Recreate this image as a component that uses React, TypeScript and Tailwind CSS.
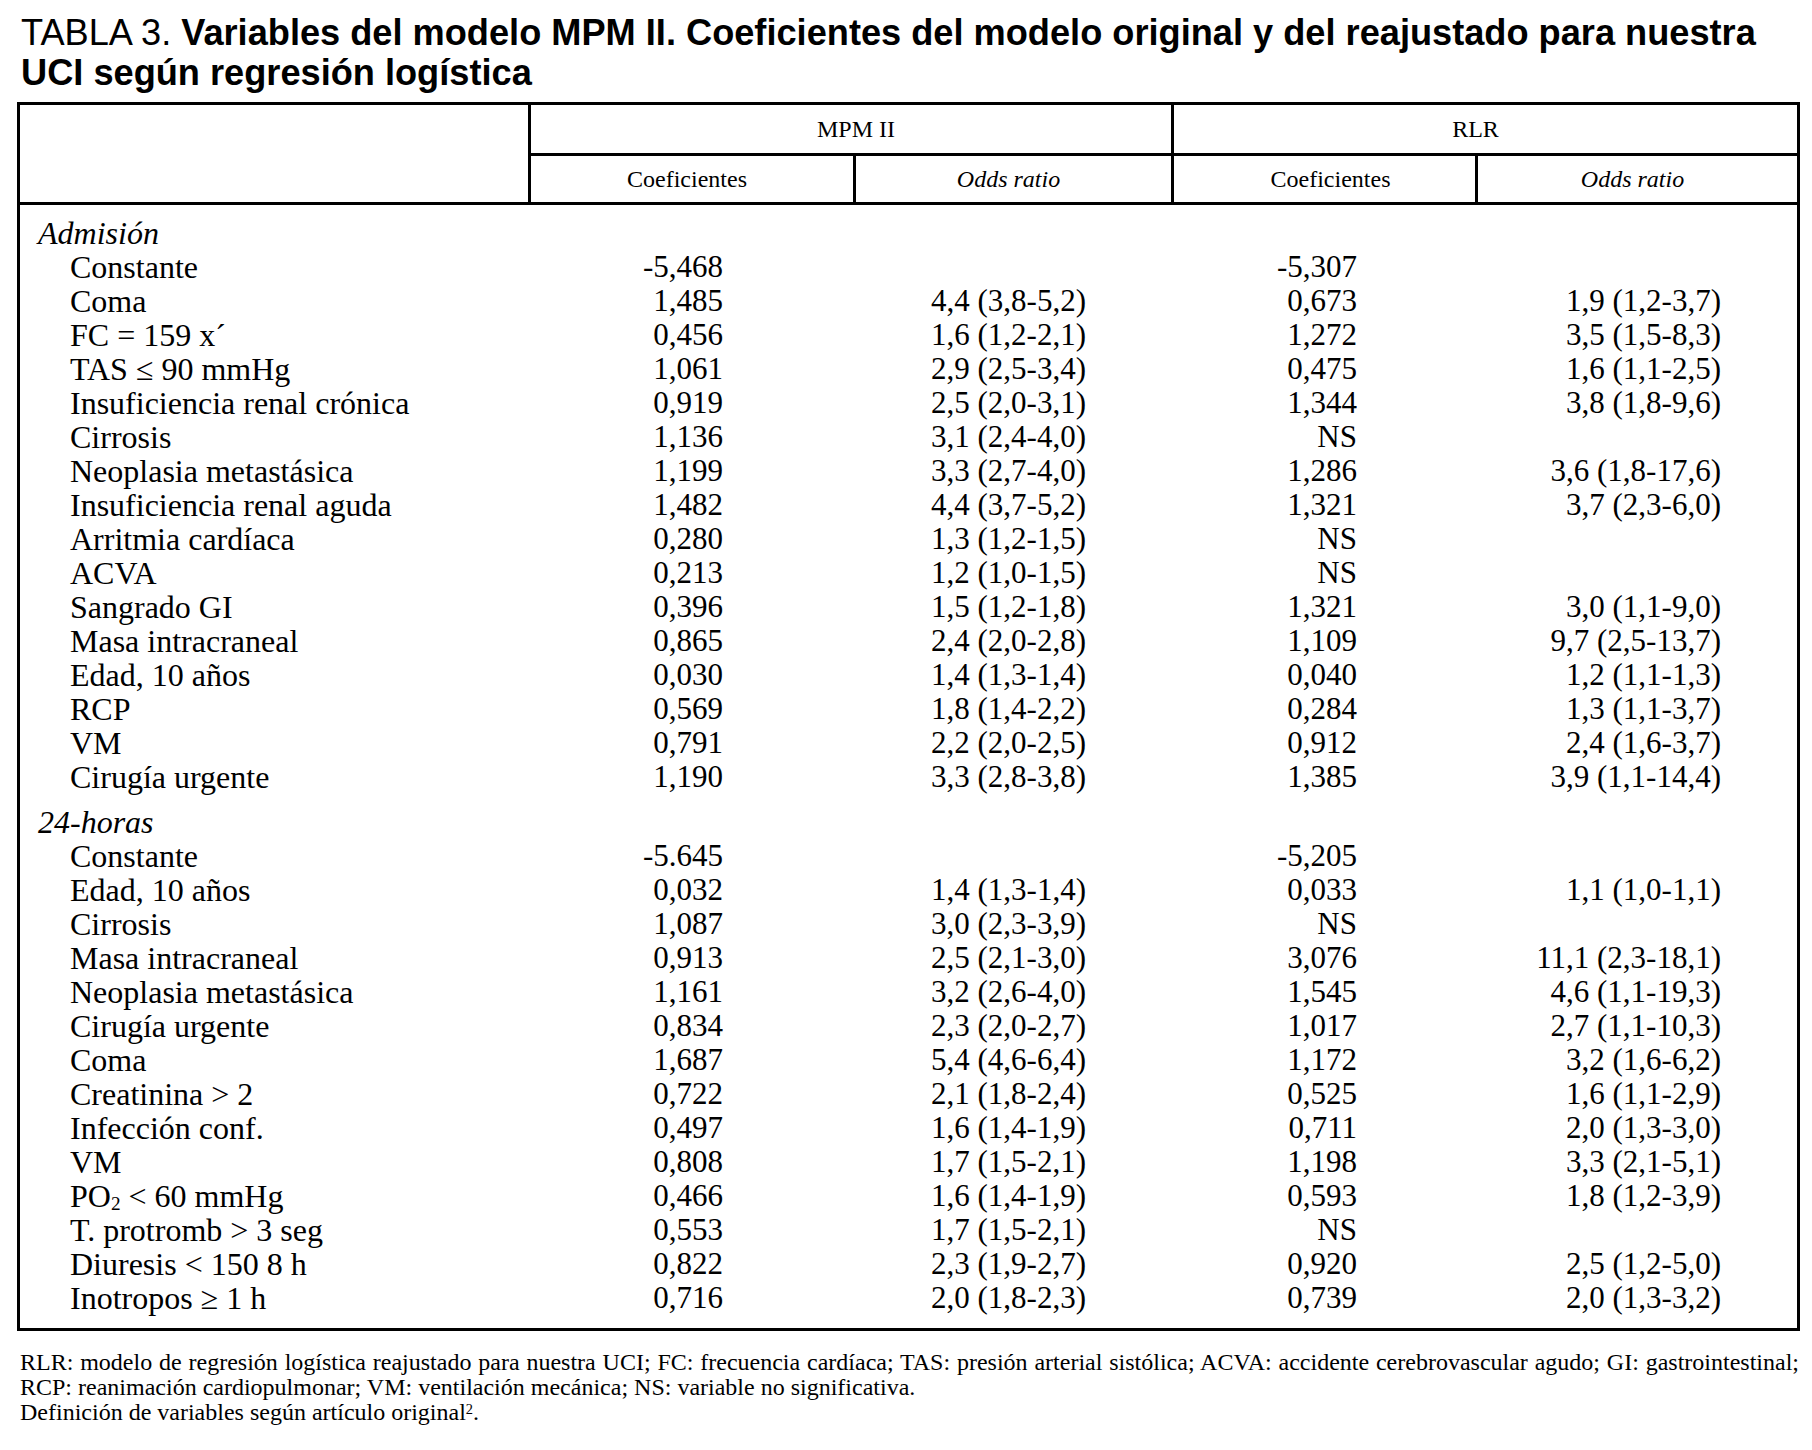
import React from "react";

type Row = { label: React.ReactNode; c1?: string; o1?: string; c2?: string; o2?: string };

const admision: Row[] = [
  { label: "Constante", c1: "-5,468", c2: "-5,307" },
  { label: "Coma", c1: "1,485", o1: "4,4 (3,8-5,2)", c2: "0,673", o2: "1,9 (1,2-3,7)" },
  { label: "FC = 159 x´", c1: "0,456", o1: "1,6 (1,2-2,1)", c2: "1,272", o2: "3,5 (1,5-8,3)" },
  { label: "TAS ≤ 90 mmHg", c1: "1,061", o1: "2,9 (2,5-3,4)", c2: "0,475", o2: "1,6 (1,1-2,5)" },
  { label: "Insuficiencia renal crónica", c1: "0,919", o1: "2,5 (2,0-3,1)", c2: "1,344", o2: "3,8 (1,8-9,6)" },
  { label: "Cirrosis", c1: "1,136", o1: "3,1 (2,4-4,0)", c2: "NS" },
  { label: "Neoplasia metastásica", c1: "1,199", o1: "3,3 (2,7-4,0)", c2: "1,286", o2: "3,6 (1,8-17,6)" },
  { label: "Insuficiencia renal aguda", c1: "1,482", o1: "4,4 (3,7-5,2)", c2: "1,321", o2: "3,7 (2,3-6,0)" },
  { label: "Arritmia cardíaca", c1: "0,280", o1: "1,3 (1,2-1,5)", c2: "NS" },
  { label: "ACVA", c1: "0,213", o1: "1,2 (1,0-1,5)", c2: "NS" },
  { label: "Sangrado GI", c1: "0,396", o1: "1,5 (1,2-1,8)", c2: "1,321", o2: "3,0 (1,1-9,0)" },
  { label: "Masa intracraneal", c1: "0,865", o1: "2,4 (2,0-2,8)", c2: "1,109", o2: "9,7 (2,5-13,7)" },
  { label: "Edad, 10 años", c1: "0,030", o1: "1,4 (1,3-1,4)", c2: "0,040", o2: "1,2 (1,1-1,3)" },
  { label: "RCP", c1: "0,569", o1: "1,8 (1,4-2,2)", c2: "0,284", o2: "1,3 (1,1-3,7)" },
  { label: "VM", c1: "0,791", o1: "2,2 (2,0-2,5)", c2: "0,912", o2: "2,4 (1,6-3,7)" },
  { label: "Cirugía urgente", c1: "1,190", o1: "3,3 (2,8-3,8)", c2: "1,385", o2: "3,9 (1,1-14,4)" },
];

const horas: Row[] = [
  { label: "Constante", c1: "-5.645", c2: "-5,205" },
  { label: "Edad, 10 años", c1: "0,032", o1: "1,4 (1,3-1,4)", c2: "0,033", o2: "1,1 (1,0-1,1)" },
  { label: "Cirrosis", c1: "1,087", o1: "3,0 (2,3-3,9)", c2: "NS" },
  { label: "Masa intracraneal", c1: "0,913", o1: "2,5 (2,1-3,0)", c2: "3,076", o2: "11,1 (2,3-18,1)" },
  { label: "Neoplasia metastásica", c1: "1,161", o1: "3,2 (2,6-4,0)", c2: "1,545", o2: "4,6 (1,1-19,3)" },
  { label: "Cirugía urgente", c1: "0,834", o1: "2,3 (2,0-2,7)", c2: "1,017", o2: "2,7 (1,1-10,3)" },
  { label: "Coma", c1: "1,687", o1: "5,4 (4,6-6,4)", c2: "1,172", o2: "3,2 (1,6-6,2)" },
  { label: "Creatinina > 2", c1: "0,722", o1: "2,1 (1,8-2,4)", c2: "0,525", o2: "1,6 (1,1-2,9)" },
  { label: "Infección conf.", c1: "0,497", o1: "1,6 (1,4-1,9)", c2: "0,711", o2: "2,0 (1,3-3,0)" },
  { label: "VM", c1: "0,808", o1: "1,7 (1,5-2,1)", c2: "1,198", o2: "3,3 (2,1-5,1)" },
  {
    label: (
      <>
        PO<sub className="text-[0.6em] leading-none bottom-[-0.15em]">2</sub> &lt; 60 mmHg
      </>
    ),
    c1: "0,466",
    o1: "1,6 (1,4-1,9)",
    c2: "0,593",
    o2: "1,8 (1,2-3,9)",
  },
  { label: "T. protromb > 3 seg", c1: "0,553", o1: "1,7 (1,5-2,1)", c2: "NS" },
  { label: "Diuresis < 150 8 h", c1: "0,822", o1: "2,3 (1,9-2,7)", c2: "0,920", o2: "2,5 (1,2-5,0)" },
  { label: "Inotropos ≥ 1 h", c1: "0,716", o1: "2,0 (1,8-2,3)", c2: "0,739", o2: "2,0 (1,3-3,2)" },
];

function DataRow({ row }: { row: Row }) {
  return (
    <div className="grid grid-cols-[508px_195px_363px_271px_364px_76px] h-[34px] leading-[34px] whitespace-nowrap">
      <div className="pl-[50px] text-[32px]">{row.label}</div>
      <div className="text-right">{row.c1}</div>
      <div className="text-right">{row.o1}</div>
      <div className="text-right">{row.c2}</div>
      <div className="text-right">{row.o2}</div>
      <div />
    </div>
  );
}

function Section({ title, rows }: { title: string; rows: Row[] }) {
  return (
    <div>
      <div className="h-[34px] leading-[34px] pl-[18px] italic text-[32px]">{title}</div>
      {rows.map((r, i) => (
        <DataRow key={i} row={r} />
      ))}
    </div>
  );
}

const serif = "font-['Liberation_Serif','Times_New_Roman',serif]";

export default function App() {
  return (
    <div className="w-[1812px] min-h-[1450px] bg-white text-black">
      {/* Title */}
      <div className="pt-[13px] pl-[21px] font-['Liberation_Sans',Arial,sans-serif] text-[36.2px] leading-[40px] whitespace-nowrap">
        <span>TABLA 3. </span>
        <span className="font-bold">
          Variables del modelo MPM II. Coeficientes del modelo original y del reajustado para nuestra
        </span>
        <br />
        <span className="font-bold">UCI según regresión logística</span>
      </div>

      {/* Table */}
      <div className={`mt-[9px] ml-[17px] w-[1783px] border-[3px] border-black ${serif}`}>
        {/* Header */}
        <div className="grid grid-cols-[508px_325px_318px_304px_322px] grid-rows-[51px_46px] border-b-[3px] border-black text-[24px]">
          <div className="row-span-2" />
          <div className="col-span-2 border-l-[3px] border-b-[3px] border-black flex items-center justify-center pl-[10px]">
            MPM II
          </div>
          <div className="col-span-2 border-l-[3px] border-b-[3px] border-black flex items-center justify-center pr-[20px]">
            RLR
          </div>
          <div className="border-l-[3px] border-black flex items-center justify-center pr-[10px]">Coeficientes</div>
          <div className="border-l-[3px] border-black flex items-center justify-center pr-[10px] italic">Odds ratio</div>
          <div className="border-l-[3px] border-black flex items-center justify-center pl-[12px]">Coeficientes</div>
          <div className="border-l-[3px] border-black flex items-center justify-center pr-[10px] italic">Odds ratio</div>
        </div>

        {/* Body */}
        <div className="pt-[11px] pb-[13px] text-[31px]">
          <Section title="Admisión" rows={admision} />
          <div className="mt-[11px]">
            <Section title="24-horas" rows={horas} />
          </div>
        </div>
      </div>

      {/* Footnotes */}
      <div className={`mt-[19px] ml-[20px] w-[1779px] text-[24px] leading-[25px] ${serif}`}>
        <div className="text-justify [text-align-last:justify]">
          RLR: modelo de regresión logística reajustado para nuestra UCI; FC: frecuencia cardíaca; TAS: presión arterial sistólica; ACVA: accidente cerebrovascular agudo; GI: gastrointestinal;
        </div>
        <div>RCP: reanimación cardiopulmonar; VM: ventilación mecánica; NS: variable no significativa.</div>
        <div>
          Definición de variables según artículo original<sup className="text-[0.6em] leading-none top-[-0.4em]">2</sup>.
        </div>
      </div>
    </div>
  );
}
